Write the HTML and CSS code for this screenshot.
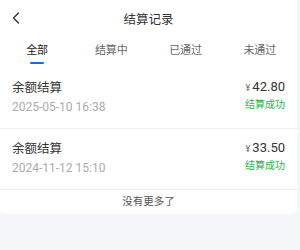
FILE: index.html
```html
<!DOCTYPE html>
<html lang="zh-CN">
<head>
    <meta charset="UTF-8">
    <meta name="viewport" content="width=device-width, initial-scale=1.0">
    <title>结算记录</title>
    <link rel="stylesheet" href="styles.css">
</head>
<body>
    <div class="page">
        <div class="header">
            <span class="back">
                <svg width="8" height="12" viewBox="0 0 8 12"><path d="M6.5 1 L1.5 6 L6.5 11" fill="none" stroke="#333" stroke-width="1.4" stroke-linecap="round" stroke-linejoin="round"/></svg>
            </span>
            <h1 class="title">结算记录</h1>
        </div>

        <ul class="tabs">
            <li class="tab active">全部</li>
            <li class="tab">结算中</li>
            <li class="tab">已通过</li>
            <li class="tab">未通过</li>
        </ul>

        <div class="list">
            <div class="item">
                <div class="info">
                    <div class="name">余额结算</div>
                    <div class="time">2025-05-10 16:38</div>
                </div>
                <div class="right">
                    <div class="amount"><span class="yen">¥</span>42.80</div>
                    <div class="status">结算成功</div>
                </div>
            </div>
            <div class="item">
                <div class="info">
                    <div class="name">余额结算</div>
                    <div class="time">2024-11-12 15:10</div>
                </div>
                <div class="right">
                    <div class="amount"><span class="yen">¥</span>33.50</div>
                    <div class="status">结算成功</div>
                </div>
            </div>
        </div>

        <div class="nomore">没有更多了</div>
    </div>
</body>
</html>
```

FILE: styles.css
```css
*{
    margin: 0;
    padding: 0;
    box-sizing: border-box;
}
body{
    background: #f5f6fa;
    font-family: Roboto, "Noto Sans CJK SC", sans-serif;
    color: #333;
}
.page{
    width: 297px;
    background: #fff;
    border-radius: 0 0 6px 6px;
}
.header{
    height: 37px;
    display: flex;
    align-items: center;
    justify-content: center;
    position: relative;
}
.back{
    position: absolute;
    left: 12px;
    top: 12px;
    display: flex;
}
.title{
    font-size: 12.5px;
    font-weight: normal;
    color: #333;
}
.tabs{
    display: flex;
    list-style: none;
    height: 31px;
}
.tab{
    flex: 1;
    text-align: center;
    font-size: 11px;
    line-height: 28px;
    color: #666;
    position: relative;
}
.tab.active{
    color: #222;
}
.tab.active::after{
    content: "";
    position: absolute;
    left: 50%;
    bottom: 4px;
    width: 14px;
    height: 2.5px;
    margin-left: -7px;
    border-radius: 2px;
    background: #1c64f2;
}
.item{
    display: flex;
    justify-content: space-between;
    padding: 12px 12px 12px;
    border-bottom: 1px solid #eee;
    height: 61px;
}
.name{
    font-size: 12.5px;
    line-height: 16px;
    color: #333;
}
.time{
    margin-top: 3px;
    font-size: 12px;
    line-height: 16px;
    color: #aaa;
}
.right{
    text-align: right;
}
.amount{
    font-size: 13px;
    line-height: 16px;
    color: #333;
    margin-top: -1px;
}
.yen{
    font-size: 9px;
    color: #666;
    margin-right: 2px;
}
.status{
    margin-top: 2px;
    font-size: 10px;
    line-height: 14px;
    color: #2ab34a;
}
.nomore{
    height: 24px;
    line-height: 24px;
    text-align: center;
    font-size: 10.5px;
    color: #555;
}
```
